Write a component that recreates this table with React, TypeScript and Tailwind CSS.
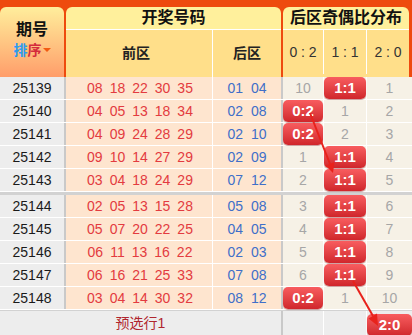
import React from 'react';

const ROWS = [
  { no: '25139', front: ['08', '18', '22', '30', '35'], back: ['01', '04'], dist: ['10', '1:1', '1'] },
  { no: '25140', front: ['04', '05', '13', '18', '34'], back: ['02', '08'], dist: ['0:2', '1', '2'] },
  { no: '25141', front: ['04', '09', '24', '28', '29'], back: ['02', '10'], dist: ['0:2', '2', '3'] },
  { no: '25142', front: ['09', '10', '14', '27', '29'], back: ['02', '09'], dist: ['1', '1:1', '4'] },
  { no: '25143', front: ['03', '04', '18', '24', '29'], back: ['07', '12'], dist: ['2', '1:1', '5'] },
  { no: '25144', front: ['02', '05', '13', '15', '28'], back: ['05', '08'], dist: ['3', '1:1', '6'] },
  { no: '25145', front: ['05', '07', '20', '22', '25'], back: ['04', '05'], dist: ['4', '1:1', '7'] },
  { no: '25146', front: ['06', '11', '13', '16', '22'], back: ['02', '03'], dist: ['5', '1:1', '8'] },
  { no: '25147', front: ['06', '16', '21', '25', '33'], back: ['07', '08'], dist: ['6', '1:1', '9'] },
  { no: '25148', front: ['03', '04', '14', '30', '32'], back: ['08', '12'], dist: ['0:2', '1', '10'] },
];

const num = { fontFamily: '"Liberation Sans", Arial, sans-serif' };
const cjk = { fontFamily: '"Liberation Sans", "Noto Sans CJK SC", sans-serif' };

function Pill({ text }: { text: string }) {
  return (
    <div className="h-[22px] w-full rounded-[5px] bg-gradient-to-b from-[#f85c5f] to-[#d0252b] shadow-[0_1px_1px_rgba(120,0,0,0.4)] flex items-center justify-center text-white font-bold text-[15px]">
      {text}
    </div>
  );
}

function DistCell({ value, className }: { value: string; className: string }) {
  const hit = value.includes(':');
  return (
    <div className={`${className} h-full flex items-center justify-center bg-[#f6f1e6] text-[#a6a6a6] text-[14px]`}>
      {hit ? <Pill text={value} /> : value}
    </div>
  );
}

function Row({ row }: { row: (typeof ROWS)[number] }) {
  return (
    <div className="flex h-[23px] border-b border-white" style={num}>
      <div className="w-[66px] border-r-2 border-[#c9c9c9] bg-[#ededed] flex items-center justify-center text-[14px] text-[#1a1a1a]">
        {row.no}
      </div>
      <div className="w-[147px] border-r border-white bg-[#fee5cf] flex items-center justify-center gap-[7px] pl-[2px] text-[14px] text-[#e33b40]">
        {row.front.map((n, i) => (
          <span key={i}>{n}</span>
        ))}
      </div>
      <div className="w-[70px] border-r-2 border-[#c9c9c9] bg-[#fee5cf] flex items-center justify-center gap-[8px] text-[14px] text-[#3f6fc9]">
        {row.back.map((n, i) => (
          <span key={i}>{n}</span>
        ))}
      </div>
      <DistCell value={row.dist[0]} className="w-[41px] border-r border-white" />
      <DistCell value={row.dist[1]} className="w-[43px] border-r border-white" />
      <DistCell value={row.dist[2]} className="flex-1" />
    </div>
  );
}

export default function App() {
  return (
    <div className="relative w-[412px] h-[335px] overflow-hidden bg-white" style={cjk}>
      {/* Header */}
      <div className="flex bg-[#ee4a0e] pt-[7px] h-[77px]">
        <div className="w-[64px] mr-[2px] rounded-t-[6px] bg-gradient-to-b from-[#ffee9c] to-[#ff9d6a] flex flex-col items-center pt-[14px]">
          <div className="text-[16px] font-bold text-[#111] leading-[18px]">期号</div>
          <div className="mt-[3px] flex items-center text-[14px] font-bold leading-[16px]">
            <span className="text-[#2b9bf0]">排</span>
            <span className="text-[#d42c3c]">序</span>
            <span className="ml-[1px] w-0 h-0 border-l-[4px] border-r-[4px] border-t-[4px] border-l-transparent border-r-transparent border-t-[#f25a12]" />
          </div>
        </div>
        <div className="w-[215px] mr-[2px] rounded-t-[6px] flex flex-col overflow-hidden">
          <div className="h-[23px] border-b border-white bg-[#fff09c] flex items-center justify-center text-[16px] font-bold text-[#111]">
            开奖号码
          </div>
          <div className="flex-1 flex bg-[#ffdf8a] text-[14px] font-bold text-[#222]">
            <div className="w-[147px] border-r border-white flex items-center justify-center pr-[6px]">前区</div>
            <div className="flex-1 flex items-center justify-center">后区</div>
          </div>
        </div>
        <div className="w-[126px] rounded-t-[6px] flex flex-col overflow-hidden">
          <div className="h-[23px] border-b border-white bg-[#fff09c] flex items-center justify-center text-[16px] font-bold text-[#111]">
            后区奇偶比分布
          </div>
          <div className="flex-1 flex bg-[#ffdf8a] text-[14px] text-[#333] pb-[3px]" style={num}>
            <div className="w-[41px] border-r border-white flex items-center justify-center">0 : 2</div>
            <div className="w-[43px] border-r border-white flex items-center justify-center">1 : 1</div>
            <div className="flex-1 flex items-center justify-center">2 : 0</div>
          </div>
        </div>
      </div>

      {/* Body */}
      {ROWS.slice(0, 5).map((r) => (
        <Row key={r.no} row={r} />
      ))}
      <div className="h-[3px] bg-[#d2d2d2]" />
      {ROWS.slice(5).map((r) => (
        <Row key={r.no} row={r} />
      ))}

      {/* Footer */}
      <div className="flex h-[26px] border-t border-[#d2d2d2] bg-[#ededed]">
        <div className="w-[283px] border-r-2 border-[#c9c9c9] flex items-center justify-center text-[14px] text-[#b0262d]">
          预选行1
        </div>
        <div className="w-[41px] border-r border-white" />
        <div className="w-[43px] border-r border-white" />
        <div className="flex-1 pt-[3px]">
          <Pill text="2:0" />
        </div>
      </div>

      {/* Trend arrows */}
      <svg className="absolute inset-0 pointer-events-none" width="412" height="335">
        <line x1="310" y1="113" x2="330" y2="164" stroke="#e8221c" strokeWidth="2" />
        <polygon points="333,173 334.5,162 325.5,165.5" fill="#e8221c" />
        <line x1="353" y1="281" x2="373" y2="316" stroke="#e8221c" strokeWidth="2" />
        <polygon points="378,326 377,313.5 368.5,318.5" fill="#e8221c" />
      </svg>
    </div>
  );
}
